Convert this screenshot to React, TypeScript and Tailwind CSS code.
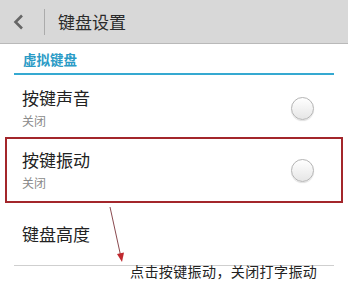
import React from "react";

const font = { fontFamily: '"Noto Sans CJK SC", "Noto Sans", sans-serif' };

function Radio() {
  return (
    <div className="w-[23px] h-[23px] rounded-full border border-[#b4b4b4] bg-gradient-to-b from-white to-[#e6e6e6] shadow-[0_1px_1px_rgba(0,0,0,0.12)]" />
  );
}

function Item({ title, sub, highlight, cls }: { title: string; sub: string; highlight?: boolean; cls: string }) {
  return (
    <div
      className={`flex items-center pl-[15px] pr-[27px] border-2 ${cls} ${highlight ? "border-[#a3262b]" : "border-transparent"}`}
    >
      <div className="flex-1 flex flex-col">
        <div className="text-[17px] leading-[20px] text-[#222]">{title}</div>
        <div className="text-[12px] leading-[14px] text-[#8a8a8a] mt-[6px]">{sub}</div>
      </div>
      <Radio />
    </div>
  );
}

export default function App() {
  return (
    <div className="relative w-[348px] h-[305px] overflow-hidden bg-white" style={font}>
      <div className="h-[44px] bg-[#d8d8d8] border-b border-[#b9b9b9] flex items-center">
        <svg width="14" height="16" viewBox="0 0 14 16" className="ml-[12px]">
          <path d="M10 1.5 L3.5 8 L10 14.5" fill="none" stroke="#666" strokeWidth="2.6" />
        </svg>
        <div className="ml-[18px] w-px h-[26px] bg-[#ababab]" />
        <div className="ml-[13px] text-[17px] leading-[20px] text-[#2a2a2a]">键盘设置</div>
      </div>
      <div className="px-[14px] pt-[7px]">
        <div className="pl-[9px] text-[13.5px] leading-[16px] font-bold text-[#2b9bc6]">虚拟键盘</div>
        <div className="mt-[6px] h-[2px] bg-[#35a9d1]" />
      </div>
      <div className="px-[5px]">
        <Item title="按键声音" sub="关闭" cls="h-[62px] pt-[4px]" />
        <Item title="按键振动" sub="关闭" highlight cls="h-[66px]" />
        <div className="flex items-center h-[62px] pl-[17px] text-[17px] leading-[20px] text-[#222]">键盘高度</div>
      </div>
      <div className="mx-[14px] h-px bg-[#cfcfcf]" />
      <svg className="absolute left-0 top-0" width="348" height="305" viewBox="0 0 348 305">
        <line x1="110" y1="207" x2="120.5" y2="255" stroke="#8a4a4f" strokeWidth="1" />
        <polygon points="117,254 124,252.5 122,262" fill="#c0282e" />
      </svg>
      <div className="absolute left-[130px] top-[262px] text-[14px] leading-[18px] text-[#222] tracking-[0.4px]">
        点击按键振动，关闭打字振动
      </div>
    </div>
  );
}
